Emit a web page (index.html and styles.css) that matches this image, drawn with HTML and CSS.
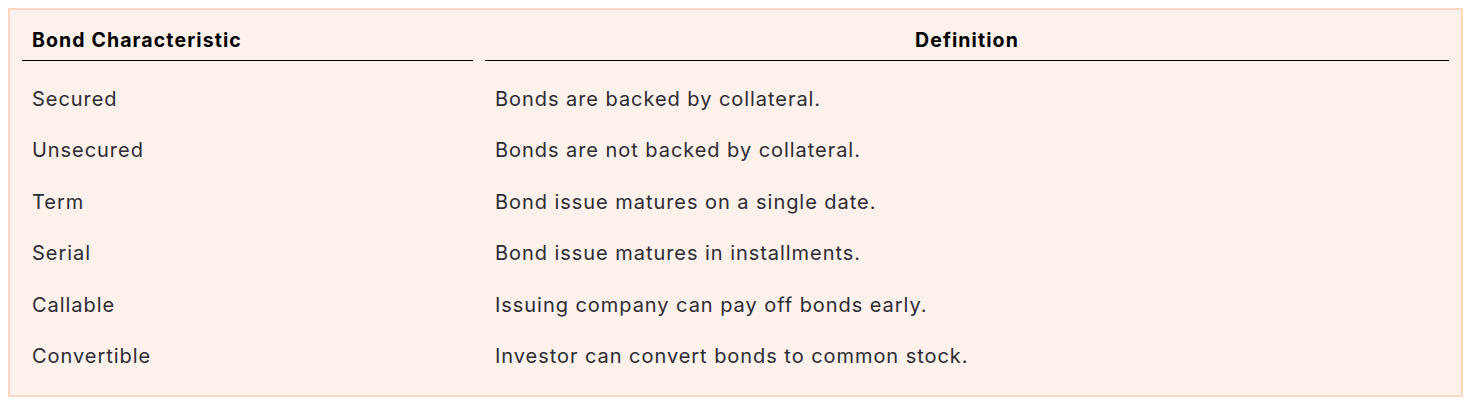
FILE: index.html
```html
<!DOCTYPE html>
<html lang="en">
<head>
<meta charset="utf-8">
<title>Bond Characteristics</title>
<link rel="stylesheet" href="styles.css">
</head>
<body>
<div class="panel">
  <table class="bond-table">
    <thead>
      <tr>
        <th class="col-char">Bond Characteristic</th>
        <th class="col-def">Definition</th>
      </tr>
    </thead>
    <tbody>
      <tr><td>Secured</td><td>Bonds are backed by collateral.</td></tr>
      <tr><td>Unsecured</td><td>Bonds are not backed by collateral.</td></tr>
      <tr><td>Term</td><td>Bond issue matures on a single date.</td></tr>
      <tr><td>Serial</td><td>Bond issue matures in installments.</td></tr>
      <tr><td>Callable</td><td>Issuing company can pay off bonds early.</td></tr>
      <tr><td>Convertible</td><td>Investor can convert bonds to common stock.</td></tr>
    </tbody>
  </table>
</div>
</body>
</html>
```

FILE: styles.css
```css
html, body {
  margin: 0;
  padding: 0;
  background: #ffffff;
}

body {
  padding: 8px;
  font-family: "Inter", "Open Sans", sans-serif;
}

.panel {
  width: 1455px;
  height: 389px;
  box-sizing: border-box;
  background: #fdf1ec;
  border: 2px solid #fbd8c1;
  padding: 10px 0 13px;
}

.bond-table {
  width: 100%;
  border-collapse: separate;
  border-spacing: 12px 0;
}

.bond-table th {
  font-size: 19.5px;
  font-weight: 700;
  color: #000000;
  line-height: 24px;
  letter-spacing: 1.1px;
  padding: 8px 10px;
  border-bottom: 1px solid #000000;
}

.bond-table th.col-char {
  width: 451px;
  box-sizing: border-box;
  text-align: left;
}

.bond-table th.col-def {
  text-align: center;
}

.bond-table td {
  font-size: 20px;
  color: #2c2c34;
  line-height: 31.4px;
  padding: 10px 10px;
  vertical-align: middle;
  letter-spacing: 0.95px;
}

.bond-table tbody tr:first-child td {
  padding-top: 23px;
}
```
